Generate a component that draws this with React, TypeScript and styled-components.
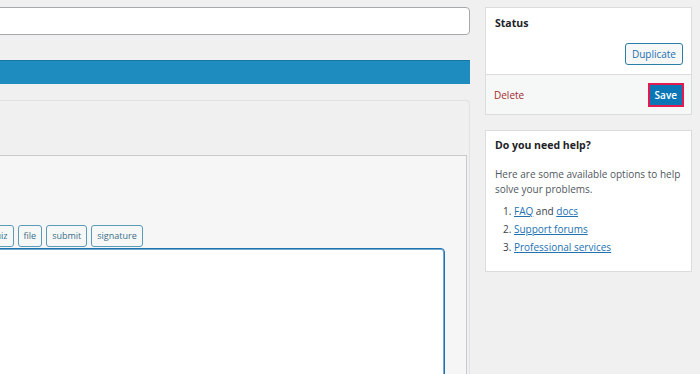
import styled, { createGlobalStyle } from "styled-components";

const GlobalStyle = createGlobalStyle`
  html, body {
    margin: 0;
    padding: 0;
    background: #f0f0f1;
    overflow: hidden;
  }
  body {
    font-family: "Open Sans", "Noto Sans", sans-serif;
    color: #1d2327;
  }
`;

const Page = styled.div`
  display: flex;
  align-items: flex-start;
  gap: 15px;
  width: 700px;
  height: 374px;
  overflow: hidden;
`;

/* main column is cut off on the left in the screenshot */
const MainColumn = styled.div`
  flex: none;
  width: 500px;
  margin-left: -30px;
  display: flex;
  flex-direction: column;
`;

const TitleInput = styled.div`
  margin-top: 7px;
  height: 26px;
  background: #fff;
  border: 1px solid #a7aaad;
  border-radius: 4px;
`;

const ProgressBar = styled.div`
  margin-top: 25px;
  height: 23px;
  background: #1e8cbe;
  border-top: 1px solid #1777a3;
`;

const Panel = styled.div`
  margin-top: 16px;
  border: 1px solid #e2e2e4;
  border-bottom: none;
  border-radius: 4px 4px 0 0;
  background: #f0f0f1;
  padding: 54px 2px 0 0;
  height: 300px;
`;

const EditorArea = styled.div`
  background: #f6f6f6;
  border-top: 1px solid #c9cacc;
  border-right: 1px solid #c9cacc;
  padding: 69px 21px 0 0;
  height: 100%;
`;

const TagRow = styled.div`
  display: flex;
  gap: 4px;
  margin-left: 13px;
`;

const Tag = styled.button`
  height: 22px;
  padding: 0 5px;
  background: #f6f7f7;
  border: 1px solid #5a9bb8;
  border-radius: 3px;
  color: #3a6f88;
  font-family: "Open Sans", "Noto Sans", sans-serif;
  font-size: 9px;
  line-height: 20px;
`;

const TextArea = styled.div`
  margin-top: 1px;
  height: 200px;
  background: #fff;
  border: 1px solid #2271b1;
  box-shadow: inset 0 0 0 1px #6fa9cf;
  border-radius: 4px 4px 0 0;
`;

const Sidebar = styled.div`
  flex: none;
  width: 207px;
  display: flex;
  flex-direction: column;
  gap: 15px;
  margin-top: 7px;
`;

const Box = styled.div`
  background: #fff;
  border: 1px solid #dcdcde;
`;

const BoxTitle = styled.h2`
  margin: 0;
  font-size: 10.5px;
  font-weight: 700;
  line-height: 14px;
  color: #1d2327;
`;

const StatusBody = styled.div`
  padding: 8px 8px 9px 9px;
  display: flex;
  flex-direction: column;
`;

const SecondaryButton = styled.button`
  align-self: flex-end;
  margin-top: 13px;
  height: 22px;
  padding: 0 6px;
  background: #f6f7f7;
  border: 1px solid #2a7fa8;
  border-radius: 3px;
  color: #2271b1;
  font-family: "Open Sans", "Noto Sans", sans-serif;
  font-size: 10px;
`;

const StatusFooter = styled.div`
  display: flex;
  justify-content: space-between;
  align-items: center;
  height: 38px;
  padding: 1px 7px 0 8px;
  background: #f6f7f7;
  border-top: 1px solid #dcdcde;
`;

const DeleteLink = styled.a`
  color: #a52a2b;
  font-size: 10px;
  text-decoration: none;
`;

const Highlight = styled.div`
  border: 2px solid #e21a4f;
  padding: 0;
`;

const PrimaryButton = styled.button`
  display: block;
  height: 20px;
  padding: 0 5px;
  background: #0a76b6;
  border: none;
  color: #fff;
  font-family: "Open Sans", "Noto Sans", sans-serif;
  font-size: 10px;
  font-weight: 600;
`;

const HelpBody = styled.div`
  padding: 7px 8px 9px 9px;
  height: 124px;
`;

const HelpText = styled.p`
  margin: 15px 0 0;
  font-size: 10px;
  line-height: 15px;
  color: #50575e;
`;

const HelpList = styled.ol`
  margin: 5px 0 0;
  padding-left: 19px;
  font-size: 10px;
  line-height: 18px;
  color: #3c434a;
`;

const HelpLink = styled.a`
  color: #2271b1;
  text-decoration: underline;
`;

export default function App() {
  return (
    <>
      <GlobalStyle />
      <Page>
        <MainColumn>
          <TitleInput />
          <ProgressBar />
          <Panel>
            <EditorArea>
              <TagRow>
                <Tag>quiz</Tag>
                <Tag>file</Tag>
                <Tag>submit</Tag>
                <Tag>signature</Tag>
              </TagRow>
              <TextArea />
            </EditorArea>
          </Panel>
        </MainColumn>
        <Sidebar>
          <Box>
            <StatusBody>
              <BoxTitle>Status</BoxTitle>
              <SecondaryButton>Duplicate</SecondaryButton>
            </StatusBody>
            <StatusFooter>
              <DeleteLink href="#">Delete</DeleteLink>
              <Highlight>
                <PrimaryButton>Save</PrimaryButton>
              </Highlight>
            </StatusFooter>
          </Box>
          <Box>
            <HelpBody>
              <BoxTitle>Do you need help?</BoxTitle>
              <HelpText>
                Here are some available options to help solve your problems.
              </HelpText>
              <HelpList>
                <li>
                  <HelpLink href="#">FAQ</HelpLink> and <HelpLink href="#">docs</HelpLink>
                </li>
                <li>
                  <HelpLink href="#">Support forums</HelpLink>
                </li>
                <li>
                  <HelpLink href="#">Professional services</HelpLink>
                </li>
              </HelpList>
            </HelpBody>
          </Box>
        </Sidebar>
      </Page>
    </>
  );
}
